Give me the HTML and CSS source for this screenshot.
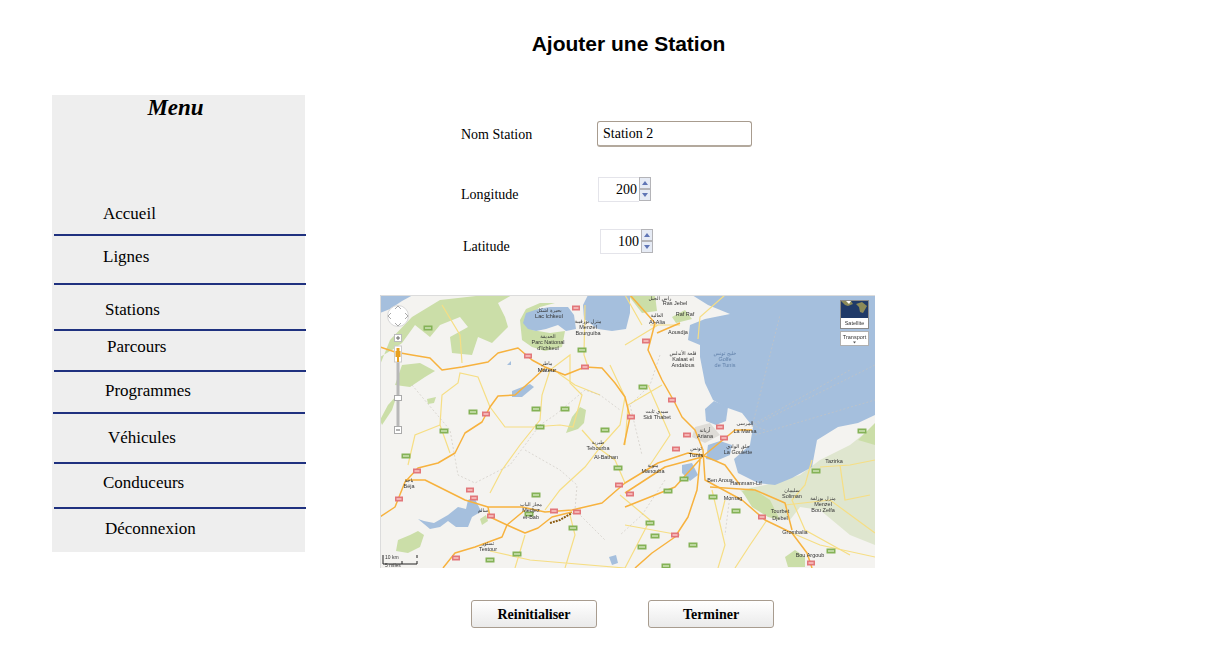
FILE: index.html
```html
<!DOCTYPE html>
<html lang="fr">
<head>
<meta charset="UTF-8">
<title>Ajouter une Station</title>
<link rel="stylesheet" href="styles.css">
</head>
<body>

<h1 class="titre">Ajouter une Station</h1>

<div class="page">
    <nav class="menu">
        <h2 class="menu-titre">Menu</h2>
        <ul class="menu-liste">
            <li class="m-accueil"><a href="#">Accueil</a></li>
            <li class="m-lignes"><a href="#">Lignes</a></li>
            <li class="m-stations"><a href="#">Stations</a></li>
            <li class="m-parcours"><a href="#">Parcours</a></li>
            <li class="m-programmes"><a href="#">Programmes</a></li>
            <li class="m-vehicules"><a href="#">Véhicules</a></li>
            <li class="m-conducteurs"><a href="#">Conduceurs</a></li>
            <li class="m-deconnexion"><a href="#">Déconnexion</a></li>
        </ul>
    </nav>

    <form class="contenu">
        <div class="ligne ligne-nom">
            <label for="nom">Nom Station</label>
            <input type="text" id="nom" class="champ-texte" value="Station 2">
        </div>
        <div class="ligne ligne-long">
            <label for="longitude">Longitude</label>
            <input type="text" id="longitude" class="champ-nombre" value="200">
            <span class="spinner"><span class="haut"></span><span class="bas"></span></span>
        </div>
        <div class="ligne ligne-lat">
            <label for="latitude">Latitude</label>
            <input type="text" id="latitude" class="champ-nombre" value="100">
            <span class="spinner"><span class="haut"></span><span class="bas"></span></span>
        </div>

        <svg class="carte" viewBox="0 0 495 273" width="495" height="273">
            <defs>
                <g id="sr"><rect x="-4" y="-2.500" width="8" height="5" fill="#e2777a"/><rect x="-2.500" y="-1" width="5" height="2" fill="#f3b4b4"/></g>
                <g id="sv"><rect x="-4.500" y="-2.500" width="9" height="5" fill="#84b256"/><rect x="-3" y="-1" width="6" height="2" fill="#bcd79e"/></g>
            </defs>
            <rect width="495" height="273" fill="#f4f3f0"/>

            <!-- vegetation -->
            <path class="vert" d="M0 70L10 45 32 22 60 5 105 0 132 0 118 8 125 22 128 32 112 48 98 42 92 60 72 58 70 42 88 32 80 22 60 30 50 42 35 30 22 48 12 55 0 62Z"/>
            <path class="vert" d="M15 90L22 70 40 68 55 76 45 82 30 92Z"/>
            <path class="vert" d="M0 125L8 110 17 100 12 115 2 130Z"/>
            <path class="vert" d="M192 122L200 112 206 115 204 128 198 134 186 138Z"/>
            <path class="vert" d="M142 45L140 25 146 14 160 8 175 8 160 12 150 20 152 35 170 38 185 36 182 52 165 56 152 52Z"/>
            <path class="vert" d="M18 245L30 240 38 236 44 240 40 252 28 258 16 256Z"/>
            <path class="vert" d="M100 224L106 220 108 226 102 230Z"/>
            <path class="vert" d="M248 0L275 0 277 16 262 18Z"/>
            <path class="vert" d="M292 22L305 15 312 24 296 28Z"/>
            <path class="vert" d="M47 104L56 102 54 108 48 109Z"/>
            <path class="vert-pale" d="M360 195L385 190 420 180 440 165 470 150 495 130 495 250 470 240 440 215 420 212 410 225 385 218 370 205Z"/>
            <path class="vert" d="M362 196L372 193 390 205 400 225 388 222 372 212Z"/>
            <path class="vert" d="M405 262L415 255 425 262 425 272 408 272Z"/>
            <path class="vert" d="M478 145L495 128 495 150Z"/>
            <path class="ville" d="M315 132L330 128 340 140 325 148 312 142Z"/>

            <!-- eau -->
            <path class="eau" d="M312 0L328 10 350 19 325 24 310 30 308 45 320 50 320 62 325 88 333 105 345 112 362 118 373 132 370 150 354 164 358 178 378 188 395 190 412 183 432 172 437 145 458 132 478 128 495 120 495 0Z"/>
            <path class="eau" d="M0 0H33L22 6 10 14 0 18Z"/>
            <path class="eau" d="M143 28L146 18 158 14 170 12 188 12 194 20 196 34 186 36 178 30 166 34 156 36 148 34Z"/>
            <path class="eau" d="M208 0H250V18L246 34 232 36 218 34 204 24 203 10Z"/>
            <path class="eau" d="M325 114L334 106 348 112 346 126 336 130 326 126Z"/>
            <path class="eau" d="M328 150L340 146 352 150 350 160 336 166 326 164Z"/>
            <path class="eau" d="M302 170L312 168 318 180 310 186 302 178Z"/>
            <path class="eau" d="M88 205L94 202 100 214 102 216 92 222 88 232 76 232 68 226 60 232 50 234 38 224 44 226 54 228 68 220 78 212 86 214Z"/>
            <path class="eau" d="M132 96L150 89 154 92 142 102 132 102Z"/>
            <path class="eau" d="M229 262L236 260 238 268 232 270Z"/>
            <path class="eau" d="M127 70L131 66 131 70Z"/>

            <!-- routes jaunes et pistes -->
            <g class="route-j">
                <path d="M60 130L62 100 78 88 80 78 98 82 110 112 125 132 152 132 180 130 193 132 202 100 190 88 190 60 170 75 162 100 160 125 140 150 122 175 110 198"/>
                <path d="M60 130L35 140 28 170M70 158L60 130M202 135L217 152 235 165 245 188"/>
                <path d="M62 10L80 40 82 68M205 10L204 60 208 72M230 70L245 102 240 130 222 150 205 172 180 195 165 215"/>
                <path d="M262 30L245 0M278 30L245 50M282 90L248 110 245 150M240 200L270 225 245 273M300 30L270 30M345 0L320 22 318 44"/>
                <path d="M432 165L425 190 412 205 425 235 470 260M405 210L450 205 495 238M440 172L470 170 495 165M332 195L345 250 338 273M190 220L195 240 185 273M145 240L135 273M110 256L150 265 245 273"/>
                <path d="M387 225L370 250 355 273M412 238L440 250 495 262"/>
                <path d="M220 100L195 90 178 78M268 90L290 140 270 170M245 230L300 240M340 225L345 205M460 170L465 205 490 200"/>
            </g>
            <g class="piste">
                <path d="M32 90L70 135 78 180 95 188 130 170 160 130 175 120 205 95 220 100 240 115M145 155L180 175 197 190 195 215 225 245M280 60L270 90 250 110 262 160M285 185L262 220 240 240M350 200L345 240M385 135L372 130 470 75M375 130L495 70M375 140L495 105M372 132L400 20"/>
            </g>

            <!-- routes principales -->
            <g class="route-o">
                <path d="M0 52L15 57 32 60 50 63 62 75 82 72 108 67 118 58 138 53 152 65 165 72 185 80 205 72 222 73 235 88 245 102 250 122 244 150"/>
                <path d="M165 73L152 85 135 100 118 101 110 112 102 127 85 138 75 158 58 168 38 173 25 187 15 212 0 222"/>
                <path d="M25 185L45 185 65 195 85 205 108 212 142 212 165 217 192 215 222 208 245 188 278 168 308 158 322 160"/>
                <path d="M108 212L110 222 127 230 145 238 158 233 172 222 192 217"/>
                <path d="M145 215L127 230 122 242 95 252 75 258 63 273"/>
                <path d="M250 0L275 28 268 55 282 85 295 108 302 122 315 135 323 155 325 185 362 205 385 225 412 238 427 258 432 273"/>
                <path d="M277 38L300 28M245 198L285 172 322 162 295 192 245 212M322 162L355 135 372 135M320 165L317 195 308 222 295 242 272 258 255 273M330 192L375 195 405 208 412 235"/>
                <path d="M322 160L345 170 360 190"/>
            </g>
            <path class="route-r" d="M170 228L180 225 192 218"/>

            <!-- boucliers -->
            <g>
                <use href="#sr" x="196" y="13"/><use href="#sr" x="148" y="61"/><use href="#sr" x="205" y="72"/>
                <use href="#sr" x="106" y="119"/><use href="#sr" x="37" y="176"/><use href="#sr" x="19" y="204"/>
                <use href="#sr" x="90" y="195"/><use href="#sr" x="94" y="203"/><use href="#sr" x="111" y="221"/>
                <use href="#sr" x="174" y="216"/><use href="#sr" x="197" y="217"/><use href="#sr" x="76" y="263"/>
                <use href="#sr" x="239" y="190"/><use href="#sr" x="266" y="46"/><use href="#sr" x="292" y="105"/>
                <use href="#sr" x="251" y="122"/><use href="#sr" x="250" y="199"/><use href="#sr" x="295" y="240"/>
                <use href="#sr" x="307" y="140"/><use href="#sr" x="340" y="132"/><use href="#sr" x="344" y="143"/>
                <use href="#sr" x="296" y="154"/><use href="#sr" x="382" y="222"/><use href="#sr" x="431" y="268"/>
                <use href="#sv" x="48" y="33"/><use href="#sv" x="202" y="55"/><use href="#sv" x="93" y="117"/>
                <use href="#sv" x="156" y="114"/><use href="#sv" x="185" y="114"/><use href="#sv" x="160" y="132"/>
                <use href="#sv" x="64" y="136"/><use href="#sv" x="26" y="161"/><use href="#sv" x="156" y="200"/>
                <use href="#sv" x="149" y="219"/><use href="#sv" x="193" y="233"/><use href="#sv" x="110" y="265"/>
                <use href="#sv" x="137" y="259"/><use href="#sv" x="225" y="135"/><use href="#sv" x="238" y="173"/>
                <use href="#sv" x="263" y="92"/><use href="#sv" x="304" y="184"/><use href="#sv" x="288" y="196"/>
                <use href="#sv" x="333" y="202"/><use href="#sv" x="356" y="216"/><use href="#sv" x="270" y="228"/>
                <use href="#sv" x="275" y="241"/><use href="#sv" x="313" y="250"/><use href="#sv" x="262" y="252"/>
                <use href="#sv" x="436" y="176"/><use href="#sv" x="482" y="136"/><use href="#sv" x="451" y="256"/>
                <use href="#sv" x="286" y="271"/>
            </g>

            <!-- noms -->
            <g class="nom">
                <text x="169" y="17" class="ar">بحيرة اشكل</text>
                <text x="169" y="23">Lac Ichkeul</text>
                <text x="168" y="43" class="ar">الحديقة</text>
                <text x="168" y="49">Parc National</text>
                <text x="168" y="55">d'Ichkeul</text>
                <text x="208" y="28" class="ar">منزل بورقيبة</text>
                <text x="208" y="34">Menzel</text>
                <text x="208" y="40">Bourguiba</text>
                <text x="167" y="70" class="ar">ماطر</text>
                <text x="167" y="77" class="fort">Mateur</text>
                <text x="29" y="187" class="ar">باجة</text>
                <text x="29" y="193">Béja</text>
                <text x="151" y="211" class="ar">مجاز الباب</text>
                <text x="151" y="217">Medjez</text>
                <text x="151" y="224">el-Bab</text>
                <text x="108" y="250" class="ar">تستور</text>
                <text x="108" y="256">Testour</text>
                <text x="218" y="149" class="ar">طبربة</text>
                <text x="218" y="155">Tebourba</text>
                <text x="226" y="164">Al-Bathan</text>
                <text x="103" y="217" class="ar">سالم</text>
                <text x="280" y="5" class="ar">رأس الجبل</text>
                <text x="295" y="10">Ras Jebel</text>
                <text x="305" y="21">Raf Raf</text>
                <text x="277" y="22" class="ar">العالية</text>
                <text x="277" y="29">Al-Alia</text>
                <text x="298" y="39">Aousdja</text>
                <text x="303" y="60" class="ar">قلعة الأندلس</text>
                <text x="303" y="66">Kalaat el</text>
                <text x="303" y="72">Andalous</text>
                <text x="277" y="118" class="ar">سيدي ثابت</text>
                <text x="277" y="124">Sidi Thabet</text>
                <text x="325" y="137" class="ar">أريانة</text>
                <text x="325" y="143">Ariana</text>
                <text x="365" y="130" class="ar">المرسى</text>
                <text x="365" y="138">La Marsa</text>
                <text x="316" y="155" class="ar">تونس</text>
                <text x="316" y="162" class="fort">Tunis</text>
                <text x="358" y="153" class="ar">حلق الوادي</text>
                <text x="358" y="159">La Goulette</text>
                <text x="273" y="172" class="ar">منوبة</text>
                <text x="273" y="178">Manouba</text>
                <text x="340" y="187">Ben Arous</text>
                <text x="366" y="190">Hammam-Lif</text>
                <text x="412" y="197" class="ar">سليمان</text>
                <text x="412" y="203">Soliman</text>
                <text x="353" y="205">Mornag</text>
                <text x="443" y="205" class="ar">منزل بوزلفة</text>
                <text x="443" y="211">Menzel</text>
                <text x="443" y="217">Bou Zelfa</text>
                <text x="454" y="168">Tazirka</text>
                <text x="400" y="218">Tourbet</text>
                <text x="400" y="225">Djebel</text>
                <text x="415" y="239">Grombalia</text>
                <text x="430" y="262">Bou Argoub</text>
                <text x="345" y="60" class="mer ar">خليج تونس</text>
                <text x="345" y="66" class="mer">Golfe</text>
                <text x="345" y="72" class="mer">de Tunis</text>
            </g>

            <!-- commandes de la carte -->
            <circle cx="18" cy="21" r="10.5" fill="#fff" stroke="#d8d8d8"/>
            <path d="M15 14L18 11 21 14M15 28L18 31 21 28M11 18L8 21 11 24M25 18L28 21 25 24" fill="none" stroke="#aaa"/>
            <rect x="14.500" y="39.500" width="7" height="7" fill="#fff" stroke="#bbb"/>
            <path d="M16 43H20M18 41V45" stroke="#666"/>
            <rect x="16.500" y="62" width="3" height="73" fill="#b8b8b8"/>
            <rect x="14.500" y="51" width="7" height="16" fill="#fff" stroke="#ccc"/>
            <path d="M16.500 53h3v3h1v6h-1.500v5h-2v-5h-1.500v-6h1z" fill="#e8a020"/>
            <rect x="14.500" y="100.500" width="7" height="5" fill="#fff" stroke="#aaa"/>
            <rect x="14.500" y="131.500" width="7" height="7" fill="#fff" stroke="#aaa"/>
            <path d="M16 135H20" stroke="#666"/>

            <rect x="460.500" y="5.500" width="28" height="28" fill="#fff" stroke="#8a8a8a"/>
            <rect x="461" y="6" width="27" height="17" fill="#203a68"/>
            <path d="M461 6h10l2 3-5 2-3-1zM476 9l6-2 5 4-4 7-3-1-1-5z" fill="#8c8a58"/>
            <path d="M466 6h5l-2 3z" fill="#fff"/>
            <rect x="460.500" y="36.500" width="28" height="14" fill="#fff" stroke="#b0b0b0"/>
            <path d="M473 46.500h3l-1.500 2z" fill="#555"/>
            <text class="ctrl" x="474.500" y="30">Satellite</text>
            <text class="ctrl" x="474.500" y="44">Transport</text>

            <path d="M3 260V269H37V266M22 269V266M37 260V263" fill="none" stroke="#222"/>
            <text class="echelle" x="5" y="264">10 km</text>
            <text class="echelle" x="5" y="272">5 miles</text>

            <path d="M0.500 273V0.500H495" fill="none" stroke="#dcdcdc"/>
        </svg>

        <div class="boutons">
            <button type="reset" class="bouton">Reinitialiser</button>
            <button type="button" class="bouton">Terminer</button>
        </div>
    </form>
</div>

</body>
</html>
```

FILE: styles.css
```css
html, body {
    margin: 0;
    padding: 0;
    background-color: #fff;
    color: #000;
    font-family: "Liberation Serif", "Times New Roman", serif;
}
.titre {
    margin: 0;
    padding: 32px 0 0 46px;
    height: 95px;
    box-sizing: border-box;
    font-family: "Liberation Sans", Arial, sans-serif;
    font-size: 21px;
    line-height: 24px;
    font-weight: bold;
    text-align: center;
}
.page {
    display: flex;
    align-items: flex-start;
    padding-left: 52px;
}

/* menu de gauche */
.menu {
    width: 253px;
    height: 457px;
    flex-shrink: 0;
    background-color: #eeeeee;
}
.menu-titre {
    margin: 0;
    height: 108px;
    padding-right: 6px;
    box-sizing: border-box;
    font-size: 23px;
    line-height: 26px;
    font-style: italic;
    font-weight: bold;
    text-align: center;
}
.menu-liste {
    list-style: none;
    margin: 0;
    padding: 0;
}
.menu-liste li {
    box-sizing: border-box;
    width: 252px;
    margin-left: 2px;
    border-bottom: 2px solid #1f317f;
    font-size: 17px;
    line-height: 22px;
}
.menu-liste a {
    color: #000;
    text-decoration: none;
}
.m-accueil { height: 33px; padding: 0 0 0 49px; }
.m-lignes { height: 49px; padding: 10px 0 0 49px; }
.m-stations { height: 46px; padding: 14px 0 0 51px; }
.m-parcours { height: 41px; padding: 5px 0 0 53px; }
.menu-liste .m-programmes { height: 42px; margin-left: 1px; padding: 8px 0 0 52px; }
.m-vehicules { height: 50px; padding: 13px 0 0 54px; }
.m-conducteurs { height: 45px; padding: 8px 0 0 49px; }
.menu-liste .m-deconnexion { height: 43px; margin-left: 1px; padding: 9px 0 0 52px; border-bottom: none; }

/* formulaire */
.contenu {
    width: 495px;
    margin-left: 75px;
    font-size: 14px;
}
.ligne {
    display: flex;
    align-items: flex-start;
    height: 25px;
    margin-left: 81px;
}
.ligne label {
    width: 136px;
    line-height: 16px;
}
.ligne-nom { height: 26px; margin-top: 26px; }
.ligne-nom label { padding-top: 6px; }
.ligne-long { margin-top: 30px; }
.ligne-long label { width: 137px; padding-top: 10px; }
.ligne-lat { margin-top: 27px; margin-left: 83px; }
.ligne-lat label { width: 137px; padding-top: 10px; }

.champ-texte {
    box-sizing: border-box;
    width: 155px;
    height: 26px;
    margin: 0;
    padding: 0 5px;
    border: 1px solid #a89c8f;
    border-bottom: 2px solid #b3a99d;
    border-radius: 3px;
    font-family: inherit;
    font-size: 14px;
    color: #000;
}
.champ-nombre {
    box-sizing: border-box;
    width: 41px;
    height: 25px;
    margin: 0;
    padding: 0 2px 0 0;
    border: 1px solid #e4e4ea;
    border-right: none;
    font-family: inherit;
    font-size: 14px;
    color: #000;
    text-align: right;
}
.spinner {
    display: flex;
    flex-direction: column;
    width: 12px;
    height: 24px;
}
.spinner span {
    position: relative;
    flex: 1;
    box-sizing: border-box;
    border: 1px solid #b4b4b8;
    background-color: #e6ebf5;
}
.spinner span::after {
    content: "";
    position: absolute;
    left: 2px;
    top: 3px;
    border-left: 3px solid transparent;
    border-right: 3px solid transparent;
}
.spinner .haut::after { border-bottom: 4px solid #5f75b5; }
.spinner .bas::after { border-top: 4px solid #5f75b5; }

/* carte */
.carte {
    display: block;
    margin-top: 41px;
    filter: blur(0.4px);
}
.vert { fill: #cbdea8; }
.vert-pale { fill: #dfe6cf; }
.ville { fill: #dedcd7; }
.eau { fill: #a5bfdd; }
.route-j { fill: none; stroke: #f6de84; stroke-width: 1.2; }
.piste { fill: none; stroke: #c9c5bd; stroke-width: 0.6; stroke-dasharray: 2 2; }
.route-o { fill: none; stroke: #f7b23e; stroke-width: 1.5; stroke-linejoin: round; }
.route-r { fill: none; stroke: #8a5a10; stroke-width: 2; stroke-dasharray: 2 1; }
.nom text {
    font-family: "Liberation Sans", Arial, sans-serif;
    font-size: 5.5px;
    fill: #333;
    text-anchor: middle;
}
.nom .ar { font-family: "DejaVu Sans", sans-serif; font-size: 5px; }
.nom .fort { font-size: 6px; fill: #111; }
.nom .mer { fill: #5f7fa8; }
.ctrl {
    font-family: "Liberation Sans", Arial, sans-serif;
    font-size: 5.5px;
    fill: #333;
    text-anchor: middle;
}
.echelle {
    font-family: "Liberation Sans", Arial, sans-serif;
    font-size: 5px;
    fill: #333;
}

/* boutons */
.boutons {
    display: flex;
    gap: 51px;
    margin-top: 32px;
    margin-left: 91px;
}
.bouton {
    width: 126px;
    height: 28px;
    padding: 2px 0 0;
    border: 1px solid #a89c8f;
    border-radius: 3px;
    background: linear-gradient(#ffffff, #eaeaea);
    font-family: inherit;
    font-size: 14px;
    font-weight: bold;
    color: #000;
}
```
